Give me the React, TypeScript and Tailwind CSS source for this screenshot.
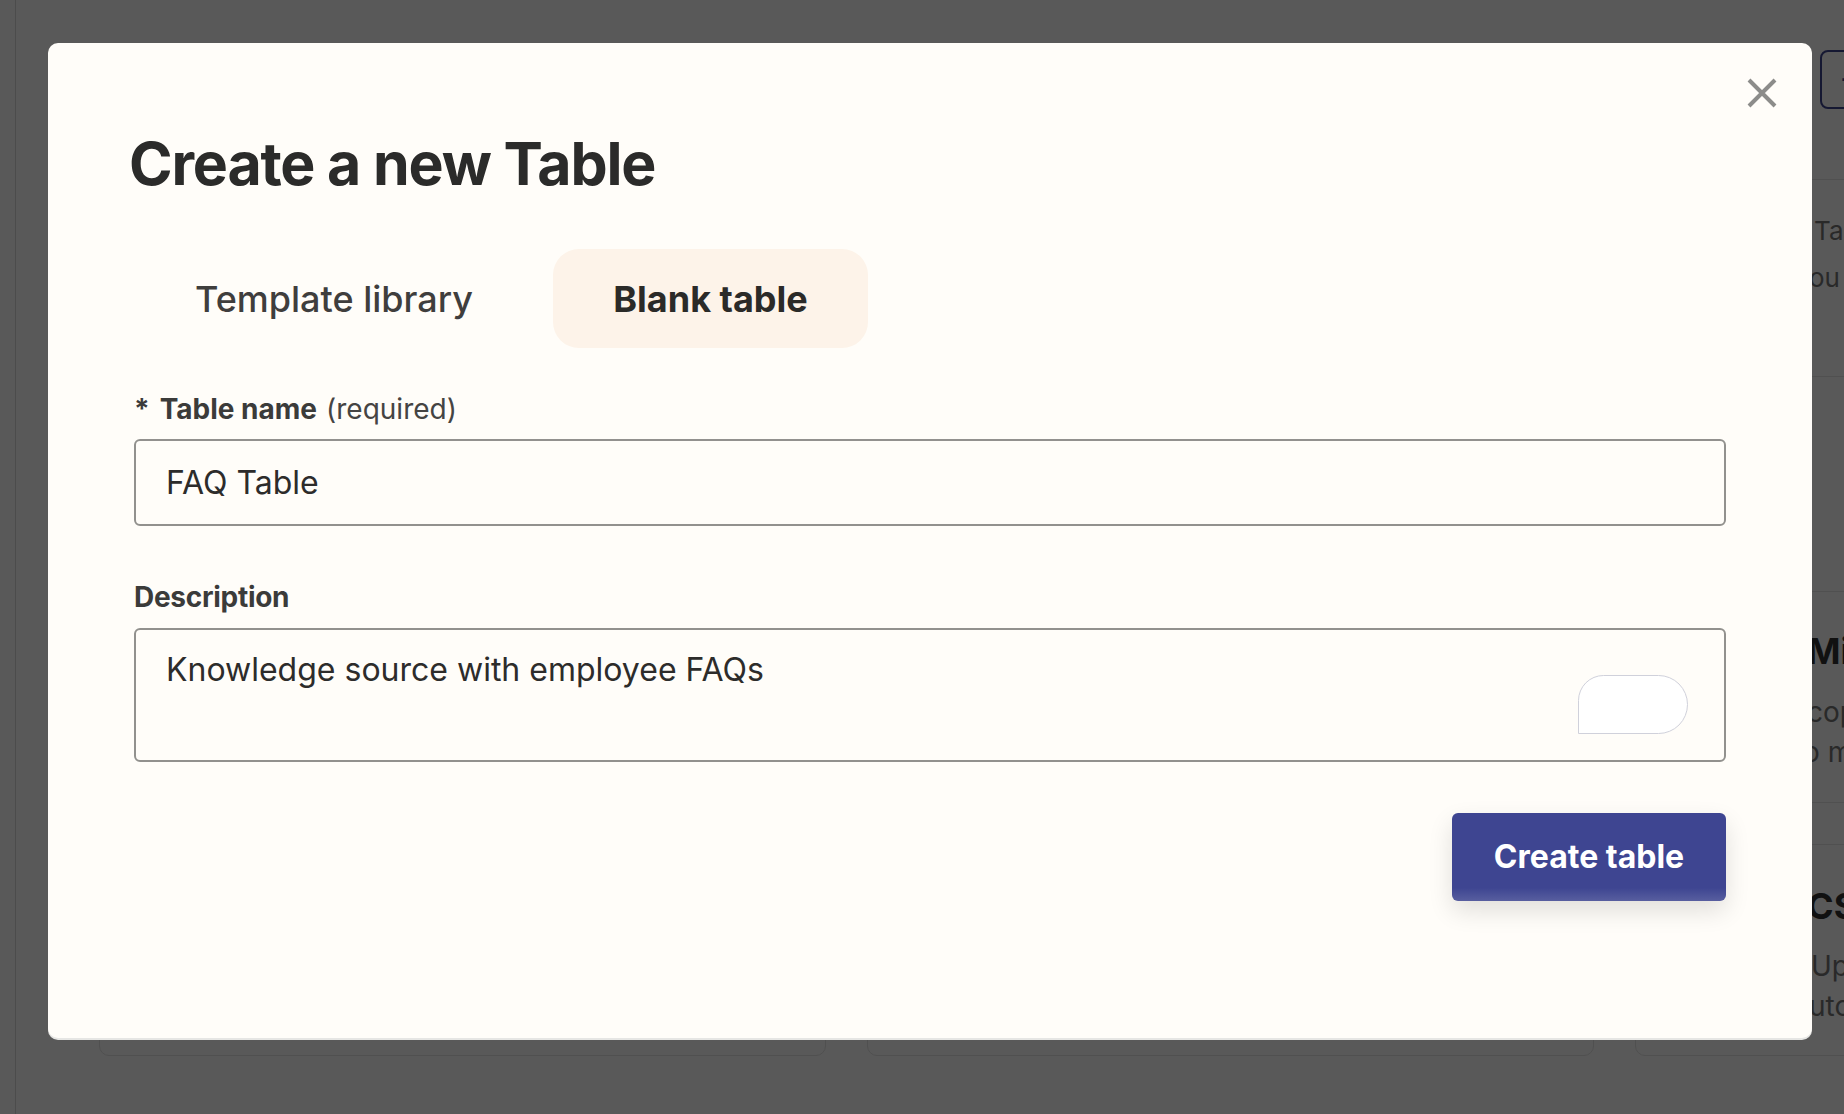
import React from "react";

function BgCard({ children, h, pt = "" }: { children?: React.ReactNode; h: string; pt?: string }) {
  return <div className={`${h} ${pt} rounded-[10px] border border-[#e4e4e4] bg-white overflow-hidden`}>{children}</div>;
}

function Background() {
  return (
    <div className="flex h-full">
      <aside className="w-[16px] shrink-0 border-r border-[#d9d9d9]" />
      <main className="flex-1 overflow-hidden pl-[83px] pt-[50px]">
        <div className="grid grid-cols-[727px_727px_727px] gap-x-[41px]">
          <div />
          <div />
          <div className="pl-[185px]">
            <div className="flex h-[59px] w-[220px] items-center rounded-[8px] border-2 border-[#3e4591] px-[18px] text-[26px] font-semibold text-[#3e4591]">
              + New table
            </div>
          </div>
        </div>

        <div className="mt-[70px] grid grid-cols-[727px_727px_727px] gap-x-[41px]">
          <BgCard h="h-[198px]" />
          <BgCard h="h-[198px]" />
          <BgCard h="h-[198px]" pt="pt-[27px]">
            <div className="pl-[178px] text-[26px] leading-[47px] text-[#777]">
              <div>Tables for your data</div>
              <div className="-ml-[5px]">ou can store rows</div>
            </div>
          </BgCard>
        </div>

        <div className="mt-[214px] grid grid-cols-[727px_727px_727px] gap-x-[41px]">
          <BgCard h="h-[212px]" />
          <BgCard h="h-[212px]" />
          <BgCard h="h-[212px]" pt="pt-[37px]">
            <div className="pl-[171px]">
              <div className="text-[36px] font-bold leading-[44px] text-[#333]">Microsoft Excel</div>
              <div className="mt-[19px] text-[28px] leading-[40px] text-[#777]">
                <div>copy rows from a sheet</div>
                <div className="-ml-[4px]">o match columns</div>
              </div>
            </div>
          </BgCard>
        </div>

        <div className="mt-[41px] grid grid-cols-[727px_727px_727px] gap-x-[41px]">
          <BgCard h="h-[212px]" />
          <BgCard h="h-[212px]" />
          <BgCard h="h-[212px]" pt="pt-[39px]">
            <div className="pl-[171px]">
              <div className="text-[36px] font-bold leading-[44px] text-[#333]">CSV import</div>
              <div className="mt-[18px] text-[28px] leading-[40px] text-[#777]">
                <div className="ml-[4px]">Upload a file</div>
                <div className="ml-[2px]">utofill a table</div>
              </div>
            </div>
          </BgCard>
        </div>
      </main>
    </div>
  );
}

export default function App() {
  return (
    <div className="relative h-[1114px] w-full overflow-hidden bg-white font-['Inter',sans-serif]">
      <Background />
      <div className="absolute inset-0 bg-black/65" />

      <div className="absolute left-[48px] top-[43px] h-[995px] w-[1764px] rounded-[10px] bg-[#fffdf9] px-[86px] pt-[91px] shadow-[0_2px_0_rgba(230,230,228,1)]">
        <button aria-label="Close" className="absolute right-[35px] top-[35px] h-[30px] w-[30px]">
          <svg viewBox="0 0 30 30" width="30" height="30">
            <path d="M2 2 L28 28 M28 2 L2 28" stroke="#8c8c8a" strokeWidth="4" fill="none" />
          </svg>
        </button>

        <h2 className="-ml-[5px] text-[59px] font-bold leading-none tracking-[-0.02em] text-[#2b2b2a]">
          Create a new Table
        </h2>

        <div className="mt-[56px] flex gap-[20px] pl-[1px]">
          <button className="flex h-[99px] w-[398px] items-center justify-center rounded-[26px] text-[36px] font-medium text-[#3f3e3d]">
            Template library
          </button>
          <button className="flex h-[99px] w-[315px] items-center justify-center rounded-[26px] bg-[#fdf3e9] text-[36px] font-bold text-[#2b2a28]">
            Blank table
          </button>
        </div>

        <div className="mt-[41px] flex items-center text-[28px] leading-[40px] text-[#3b3b3a]">
          <span className="font-bold">*</span>
          <span className="ml-[10px] font-bold">Table name</span>
          <span className="ml-[9px] text-[#454443]">(required)</span>
        </div>
        <div className="mt-[10px] flex h-[87px] items-center rounded-[6px] border-2 border-[#92918e] px-[30px] text-[32px] text-[#2d2c2b]">
          FAQ Table
        </div>

        <div className="mt-[51px] text-[28px] font-bold leading-[40px] tracking-[-0.01em] text-[#3b3b3a]">Description</div>
        <div className="relative mt-[11px] h-[134px] rounded-[6px] border-2 border-[#92918e] px-[30px] pt-[17px] text-[32px] leading-[45px] text-[#2d2c2b]">
          Knowledge source with employee FAQs
          <div className="absolute bottom-[26px] right-[36px] h-[59px] w-[110px] rounded-tl-[26px] rounded-tr-[30px] rounded-br-[30px] border-[1.5px] border-[#d0d1db] bg-white" />
        </div>

        <div className="mt-[51px] flex justify-end">
          <button className="h-[88px] w-[274px] rounded-[6px] bg-[#3e4591] bg-gradient-to-b from-[#3e4591] from-[85%] to-[#585e9f] text-[32px] font-bold text-white shadow-[0_10px_24px_rgba(0,0,0,0.12)]">
            Create table
          </button>
        </div>
      </div>
    </div>
  );
}
